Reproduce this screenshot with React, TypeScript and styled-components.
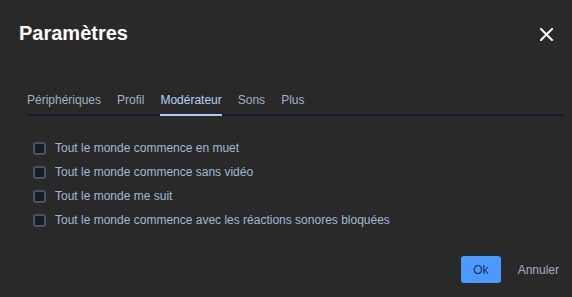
import React, { useState } from "react";
import styled, { createGlobalStyle } from "styled-components";

const Global = createGlobalStyle`
  html, body { margin: 0; padding: 0; background: #292929; }
  body { font-family: "Liberation Sans", Arial, sans-serif; }
  * { box-sizing: border-box; }
`;

const Dialog = styled.div`
  width: 572px;
  height: 297px;
  background: #292929;
  display: flex;
  flex-direction: column;
`;

const Header = styled.div`
  display: flex;
  align-items: center;
  justify-content: space-between;
  padding: 21px 19px 0 19px;
`;

const Title = styled.h1`
  margin: 0;
  font-size: 20px;
  line-height: 24px;
  font-weight: 700;
  color: #ffffff;
`;

const CloseButton = styled.button`
  width: 13px;
  height: 13px;
  padding: 0;
  border: none;
  background: none;
  display: flex;
  cursor: pointer;
  margin-top: 2px;
`;

const Body = styled.div`
  padding: 47px 9px 0 27px;
`;

const TabList = styled.div`
  display: flex;
  gap: 16px;
  border-bottom: 2px solid #151c2b;
`;

const Tab = styled.button<{ $active?: boolean }>`
  font-family: inherit;
  font-size: 12px;
  line-height: 16px;
  padding: 0 0 6px 0;
  margin-bottom: -2px;
  border: none;
  border-bottom: 2px solid ${(p) => (p.$active ? "#a9cbf7" : "transparent")};
  background: none;
  color: ${(p) => (p.$active ? "#b3d3fb" : "#a3b0c4")};
  cursor: pointer;
`;

const Options = styled.div`
  display: flex;
  flex-direction: column;
  padding: 20px 0 0 6px;
`;

const Row = styled.label`
  display: flex;
  align-items: center;
  gap: 9px;
  height: 24px;
  cursor: pointer;
`;

const Box = styled.span<{ $checked?: boolean }>`
  width: 13px;
  height: 13px;
  border: 2px solid #4a5366;
  border-radius: 3px;
  background: ${(p) => (p.$checked ? "#4c9aff" : "#151b29")};
  flex: none;
`;

const Label = styled.span`
  font-size: 12px;
  line-height: 16px;
  color: #a2b8d8;
`;

const Footer = styled.div`
  margin-top: auto;
  display: flex;
  justify-content: flex-end;
  align-items: center;
  gap: 13px;
  padding: 0 9px 14px 0;
`;

const PrimaryButton = styled.button`
  height: 27px;
  padding: 0 12px;
  border: none;
  border-radius: 3px;
  background: #4c9aff;
  color: #1f2e48;
  font-family: inherit;
  font-size: 12px;
  cursor: pointer;
`;

const SubtleButton = styled.button`
  height: 27px;
  padding: 0 4px;
  border: none;
  background: none;
  color: #a3b0c4;
  font-family: inherit;
  font-size: 12px;
  cursor: pointer;
`;

const tabs = ["Périphériques", "Profil", "Modérateur", "Sons", "Plus"];
const options = [
  "Tout le monde commence en muet",
  "Tout le monde commence sans vidéo",
  "Tout le monde me suit",
  "Tout le monde commence avec les réactions sonores bloquées",
];

export default function App() {
  const [active, setActive] = useState(2);
  const [checked, setChecked] = useState<boolean[]>([false, false, false, false]);
  return (
    <>
      <Global />
      <Dialog>
        <Header>
          <Title>Paramètres</Title>
          <CloseButton aria-label="Fermer">
            <svg width="13" height="13" viewBox="0 0 13 13">
              <path d="M1 1 L12 12 M12 1 L1 12" stroke="#ffffff" strokeWidth="2" strokeLinecap="square" />
            </svg>
          </CloseButton>
        </Header>
        <Body>
          <TabList>
            {tabs.map((t, i) => (
              <Tab key={t} $active={i === active} onClick={() => setActive(i)}>
                {t}
              </Tab>
            ))}
          </TabList>
          <Options>
            {options.map((o, i) => (
              <Row
                key={o}
                onClick={() => setChecked((c) => c.map((v, j) => (j === i ? !v : v)))}
              >
                <Box $checked={checked[i]} />
                <Label>{o}</Label>
              </Row>
            ))}
          </Options>
        </Body>
        <Footer>
          <PrimaryButton>Ok</PrimaryButton>
          <SubtleButton>Annuler</SubtleButton>
        </Footer>
      </Dialog>
    </>
  );
}
